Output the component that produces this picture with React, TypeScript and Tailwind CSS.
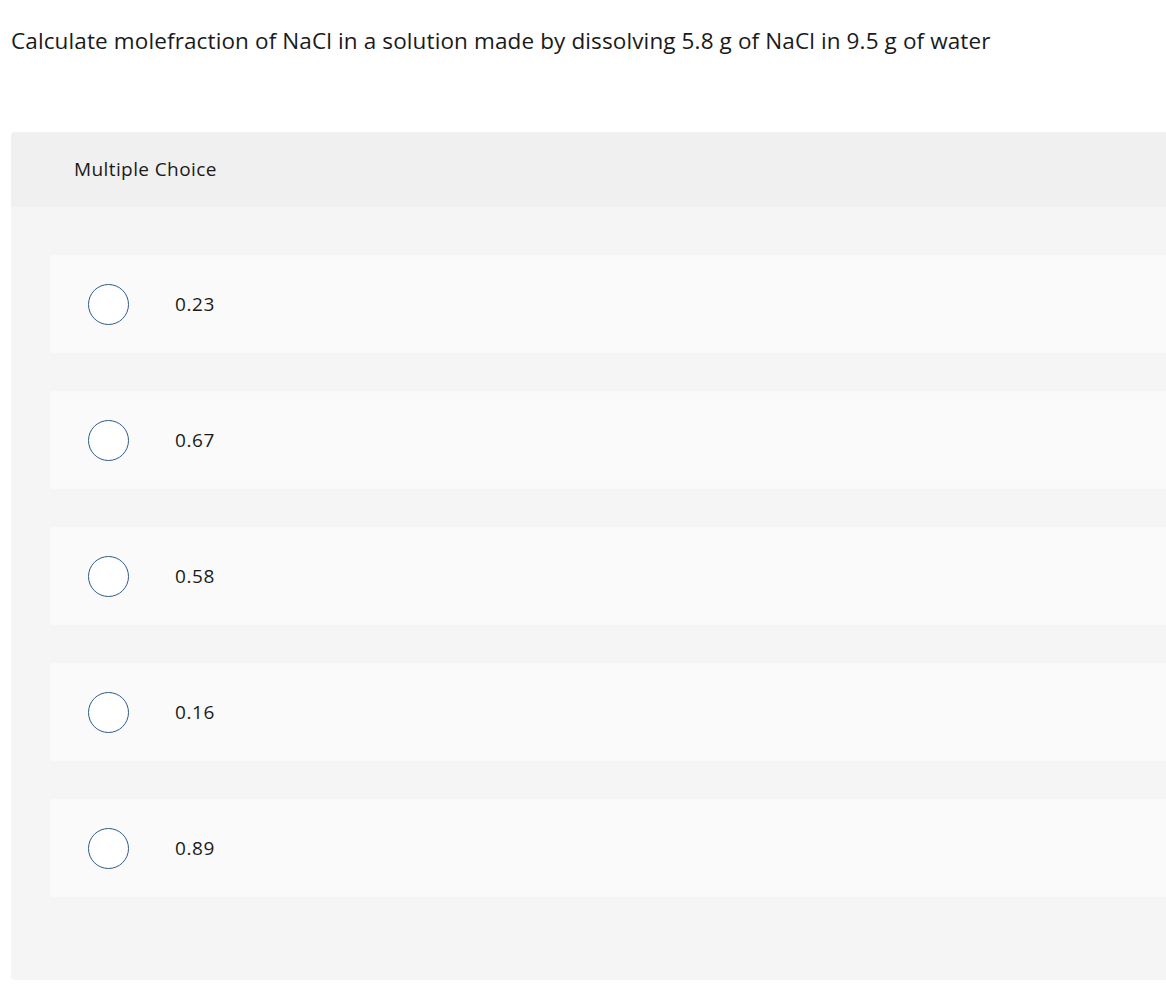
const options = ['0.23', '0.67', '0.58', '0.16', '0.89'];

export default function App() {
  return (
    <div
      className="min-h-[1003px] bg-white text-[#1a1a1a]"
      style={{ fontFamily: '"Open Sans", "Liberation Sans", sans-serif' }}
    >
      <div className="pt-[26px] pl-[11px] h-[132px]">
        <p className="text-[22.5px] tracking-[0.12px] leading-[29px]">
          Calculate molefraction of NaCl in a solution made by dissolving 5.8 g of NaCl in 9.5 g of water
        </p>
      </div>

      <div className="ml-[11px] rounded-l-[4px] overflow-hidden bg-[#f5f5f5]">
        <div className="h-[75px] bg-[#f0f0f0] flex items-center pl-[63px] text-[19px] tracking-[0.4px]">
          Multiple Choice
        </div>
        <div className="pt-[48px] pb-[83px] pl-[39px] flex flex-col gap-[38px]">
          {options.map((o) => (
            <label
              key={o}
              className="h-[98px] bg-[#fafafa] rounded-l-[4px] flex items-center pl-[38px] cursor-pointer"
            >
              <span className="w-[41px] h-[41px] rounded-full border border-[#2b5c8f] bg-white shrink-0" />
              <span className="ml-[46px] text-[19px] tracking-[0.6px]">{o}</span>
            </label>
          ))}
        </div>
      </div>
    </div>
  );
}
